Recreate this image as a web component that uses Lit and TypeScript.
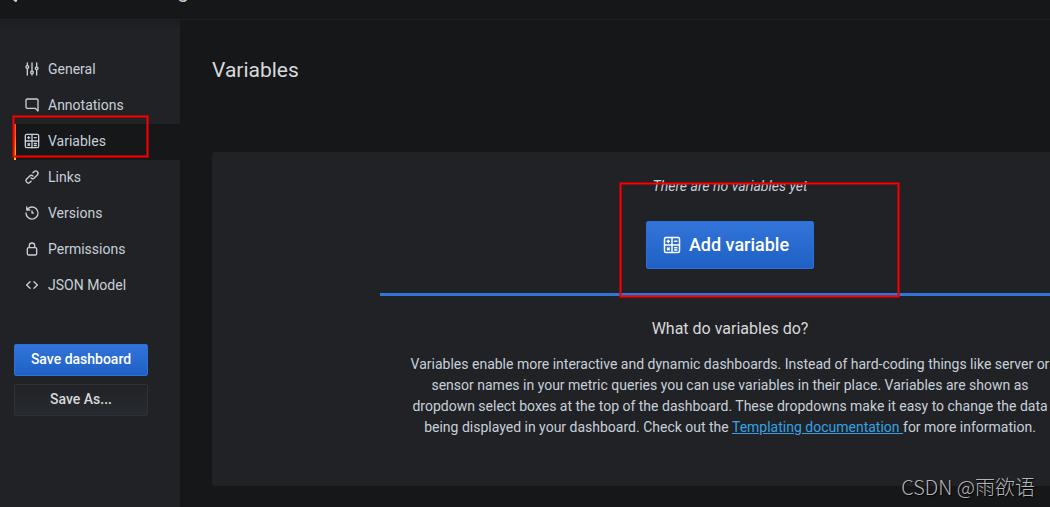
import { LitElement, html, css, svg } from "lit";
import { customElement, property } from "lit/decorators.js";

const ICONS: Record<string, unknown> = {
  sliders: svg`<path d="M20,8.18V3a1,1,0,0,0-2,0V8.18a3,3,0,0,0,0,5.64V21a1,1,0,0,0,2,0V13.82a3,3,0,0,0,0-5.64ZM19,12a1,1,0,1,1,1-1A1,1,0,0,1,19,12Zm-6,2.18V3a1,1,0,0,0-2,0V14.18a3,3,0,0,0,0,5.64V21a1,1,0,0,0,2,0V19.82a3,3,0,0,0,0-5.64ZM12,18a1,1,0,1,1,1-1A1,1,0,0,1,12,18ZM6,6.18V3A1,1,0,0,0,4,3V6.18a3,3,0,0,0,0,5.64V21a1,1,0,0,0,2,0V11.82A3,3,0,0,0,6,6.18ZM5,10A1,1,0,1,1,6,9,1,1,0,0,1,5,10Z"/>`,
  comment: svg`<path d="M19,2H5A3,3,0,0,0,2,5V15a3,3,0,0,0,3,3H16.59l3.7,3.71A1,1,0,0,0,21,22a.84.84,0,0,0,.38-.08A1,1,0,0,0,22,21V5A3,3,0,0,0,19,2Zm1,16.59-2.29-2.3A1,1,0,0,0,17,16H5a1,1,0,0,1-1-1V5A1,1,0,0,1,5,4H19a1,1,0,0,1,1,1Z"/>`,
  calculator: svg`<g fill="none" stroke="currentColor" stroke-width="2" stroke-linecap="round">
    <rect x="2" y="2" width="20" height="20" rx="2"/>
    <path d="M12 2V22M2 12H22M5.5 7h3M7 5.5v3M15.5 7h3M6 16l2.4 2.4M8.4 16L6 18.4M15.5 15.7h3M15.5 18.7h3"/>
  </g>`,
  link: svg`<path d="M10,17.55,8.23,19.27a2.47,2.47,0,0,1-3.5-3.5l4.54-4.55a2.46,2.46,0,0,1,3.39-.09l.12.1a1,1,0,0,0,1.4-1.43A2.75,2.75,0,0,0,14,9.59a4.46,4.46,0,0,0-6.09.22L3.31,14.36a4.48,4.48,0,0,0,6.33,6.33L11.37,19A1,1,0,0,0,10,17.55ZM20.69,3.31a4.49,4.49,0,0,0-6.33,0L12.63,5A1,1,0,0,0,14,6.45l1.73-1.72a2.47,2.47,0,0,1,3.5,3.5l-4.54,4.55a2.46,2.46,0,0,1-3.39.09l-.12-.1a1,1,0,0,0-1.4,1.43,2.75,2.75,0,0,0,.23.21,4.47,4.47,0,0,0,6.09-.22l4.55-4.55A4.49,4.49,0,0,0,20.69,3.31Z"/>`,
  history: svg`<path d="M12,2A10,10,0,0,0,5.12,4.77V3a1,1,0,0,0-2,0V7.5a1,1,0,0,0,1,1H8.62a1,1,0,0,0,0-2H6.22A8,8,0,1,1,4,12a1,1,0,0,0-2,0A10,10,0,1,0,12,2Zm0,6a1,1,0,0,0-1,1v3a1,1,0,0,0,1,1h2a1,1,0,0,0,0-2H13V9A1,1,0,0,0,12,8Z"/>`,
  lock: svg`<path d="M17,9V7A5,5,0,0,0,7,7V9a3,3,0,0,0-3,3v7a3,3,0,0,0,3,3H17a3,3,0,0,0,3-3V12A3,3,0,0,0,17,9ZM9,7a3,3,0,0,1,6,0V9H9Zm9,12a1,1,0,0,1-1,1H7a1,1,0,0,1-1-1V12a1,1,0,0,1,1-1H17a1,1,0,0,1,1,1Z"/>`,
  brackets: svg`<path d="M9.71,6.29a1,1,0,0,0-1.42,0l-5,5a1,1,0,0,0,0,1.42l5,5a1,1,0,0,0,1.42,0,1,1,0,0,0,0-1.42L5.41,12l4.3-4.29A1,1,0,0,0,9.71,6.29Zm11,5-5-5a1,1,0,0,0-1.42,1.42L18.59,12l-4.3,4.29a1,1,0,0,0,0,1.42,1,1,0,0,0,1.42,0l5-5A1,1,0,0,0,20.71,11.29Z"/>`,
  back: svg`<path d="M19,12.800H6.400l6.300-6.300a1.400,1.400,0,1,0-2-2l-8,8a1.400,1.400,0,0,0,0,2l8,8a1.400,1.400,0,0,0,2-2L7,15H19a1,1,0,0,0,0-2Z"/>`,
};

@customElement("ui-icon")
export class UiIcon extends LitElement {
  @property() name = "";

  static styles = css`
    :host { display: block; flex: none; width: 16px; height: 16px; }
    .icon { display: block; width: 100%; height: 100%; fill: currentColor; overflow: visible; }
  `;

  render() {
    return html`<svg class="icon" viewBox="0 0 24 24" aria-hidden="true">${ICONS[this.name]}</svg>`;
  }
}

const SECTIONS = [
  ["sliders", "General"],
  ["comment", "Annotations"],
  ["calculator", "Variables"],
  ["link", "Links"],
  ["history", "Versions"],
  ["lock", "Permissions"],
  ["brackets", "JSON Model"],
];

@customElement("app-root")
export class AppRoot extends LitElement {
  static styles = css`
    :host {
      position: relative;
      display: flex;
      flex-direction: column;
      height: 100vh;
      overflow: hidden;
      background: #161719;
      color: #c7d0d9;
      font: 14px/21px Roboto, "Noto Sans CJK SC", sans-serif;
    }
    * { box-sizing: border-box; }
    .header {
      display: flex;
      align-items: flex-end;
      gap: 98px;
      height: 20px;
      flex: none;
      padding: 0 4px 16px;
      border-bottom: 1px solid #202226;
      font-size: 20px;
      line-height: 24px;
    }
    .back { width: 24px; height: 24px; }
    .body { display: flex; flex: 1; min-height: 0; }
    .sidebar {
      width: 180px;
      flex: none;
      padding-top: 32px;
      background: linear-gradient(#1c1d20, #212226 10px);
    }
    .item {
      position: relative;
      display: flex;
      align-items: center;
      gap: 8px;
      height: 36px;
      margin-left: 14px;
      padding: 0 0 2px 10px;
      color: inherit;
      text-decoration: none;
    }
    .item.active { background: #161719; }
    .item.active::before {
      content: "";
      position: absolute;
      inset: 0 auto 0 0;
      width: 2px;
      background: linear-gradient(#f05a28 30%, #fbca0a 99%);
    }
    .mark {
      position: absolute;
      border: 1px solid #ff0000;
      box-shadow: 0 0 0 1px rgba(220, 0, 0, 0.6), inset 0 0 0 1px rgba(220, 0, 0, 0.6);
      pointer-events: none;
    }
    .nav-mark { left: -1px; top: -8px; width: 135px; height: 41px; }
    .actions {
      display: flex;
      flex-direction: column;
      gap: 8px;
      padding: 40px 32px 0 14px;
    }
    .btn {
      display: flex;
      align-items: center;
      justify-content: center;
      height: 32px;
      padding: 0 8px 2px;
      border: 1px solid #2f6fdb;
      border-radius: 2px;
      background: linear-gradient(#3274d9, #1f60c4);
      color: #fff;
      font: 500 14px/20px Roboto, sans-serif;
    }
    .secondary {
      border-color: #2c3235;
      background: linear-gradient(#202226, #272b30);
      color: #d8d9da;
    }
    .content { flex: 1; min-width: 0; padding: 36px 32px 0; }
    .title {
      margin: 0 0 68px;
      color: #d8d9da;
      font-size: 21px;
      font-weight: 400;
      line-height: 28px;
    }
    .card {
      display: flex;
      flex-direction: column;
      align-items: center;
      min-width: 1036px;
      padding: 24px 24px 48px;
      border-radius: 3px;
      background: #212226;
      text-align: center;
    }
    .empty { margin: 0 0 24px; font-style: italic; }
    .cta { position: relative; }
    .large { height: 48px; gap: 8px; padding: 0 24px 0 16px; font-size: 18px; }
    .large ui-icon { width: 18px; height: 18px; }
    .cta-mark { left: -26px; top: -38px; width: 279px; height: 114px; }
    .info {
      width: 700px;
      margin-top: 24px;
      padding: 21px 24px 0;
      border-top: 3px solid #3274d9;
    }
    .question {
      margin: 0 0 13px;
      color: #d8d9da;
      font-size: 16px;
      font-weight: 400;
      line-height: 24px;
    }
    .text { margin: 0; }
    .doc { color: #33a2e5; text-decoration: underline; }
    .watermark {
      position: absolute;
      right: 15px;
      bottom: 6px;
      color: #b4b5b7;
      font-family: "Noto Sans CJK SC", sans-serif;
      font-size: 20px;
      font-weight: 300;
      line-height: 28px;
      text-shadow: 1px 1px 1px #000;
    }
  `;

  render() {
    return html`
      <header class="header">
        <ui-icon class="back" name="back"></ui-icon>
        <span>Settings</span>
      </header>
      <div class="body">
        <aside class="sidebar">
          <nav>
            ${SECTIONS.map(([icon, label]) => html`
              <a class="item ${label === "Variables" ? "active" : ""}" href="#">
                <ui-icon name=${icon}></ui-icon>${label}
                ${label === "Variables" ? html`<span class="mark nav-mark"></span>` : ""}
              </a>`)}
          </nav>
          <div class="actions">
            <button class="btn">Save dashboard</button>
            <button class="btn secondary">Save As...</button>
          </div>
        </aside>
        <main class="content">
          <h1 class="title">Variables</h1>
          <section class="card">
            <p class="empty">There are no variables yet</p>
            <div class="cta">
              <button class="btn large"><ui-icon name="calculator"></ui-icon>Add variable</button>
              <span class="mark cta-mark"></span>
            </div>
            <div class="info">
              <h2 class="question">What do variables do?</h2>
              <p class="text">Variables enable more interactive and dynamic dashboards. Instead of hard-coding things like server or sensor names in your metric queries you can use variables in their place. Variables are shown as dropdown select boxes at the top of the dashboard. These dropdowns make it easy to change the data being displayed in your dashboard. Check out the <a class="doc" href="#">Templating documentation </a>for more information.</p>
            </div>
          </section>
        </main>
      </div>
      <div class="watermark">CSDN @雨欲语</div>
    `;
  }
}
